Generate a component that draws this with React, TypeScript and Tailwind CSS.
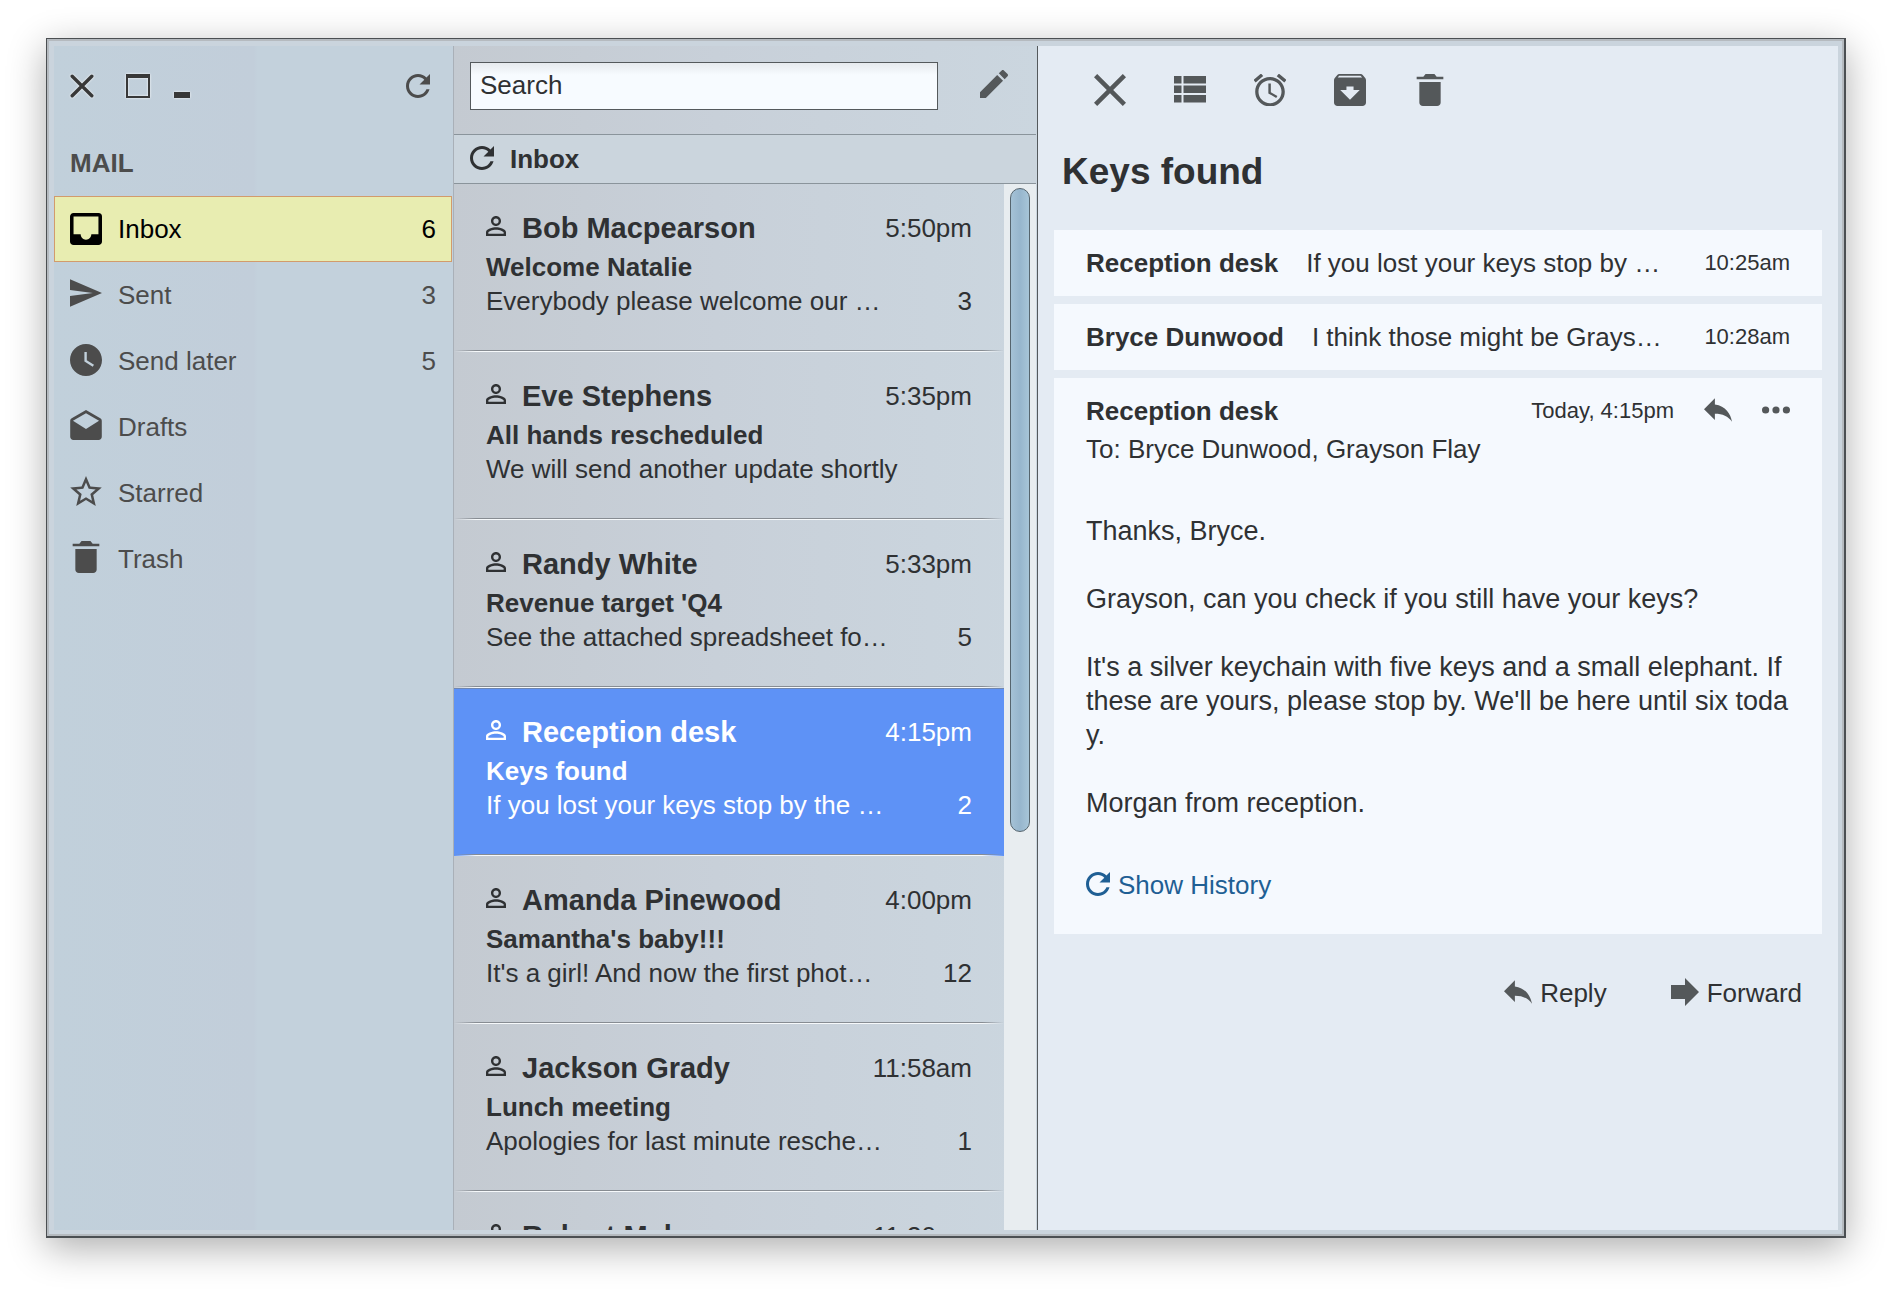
import type { ReactNode } from "react";
import { IoMdAlarm, IoMdArchive, IoMdClose, IoMdCreate, IoMdRefresh, IoMdTrash } from "react-icons/io";
import { MdDrafts, MdInbox, MdPersonOutline, MdReply, MdSend, MdStarOutline, MdWatchLater } from "react-icons/md";

type Folder = { name: string; count?: number; icon: ReactNode; active?: boolean };

const folders: Folder[] = [
  { name: "Inbox", count: 6, active: true, icon: <MdInbox viewBox="3 3 18 18" className="h-8 w-8" /> },
  { name: "Sent", count: 3, icon: <MdSend viewBox="2 3 21 18" className="mb-1 h-7 w-8" /> },
  { name: "Send later", count: 5, icon: <MdWatchLater viewBox="2 2 20 20" className="mb-0.5 h-8 w-8" /> },
  { name: "Drafts", icon: <MdDrafts viewBox="2 1 20 19" className="mb-1 h-[30px] w-8" /> },
  { name: "Starred", icon: <MdStarOutline viewBox="2 2 20 19" className="mb-1 h-[30px] w-8" /> },
  { name: "Trash", icon: <IoMdTrash viewBox="64 64 384 384" className="mb-1 h-8 w-8" /> },
];

type Mail = { from: string; time: string; subject: string; preview: string; count?: number; selected?: boolean };

const mails: Mail[] = [
  { from: "Bob Macpearson", time: "5:50pm", subject: "Welcome Natalie", preview: "Everybody please welcome our …", count: 3 },
  { from: "Eve Stephens", time: "5:35pm", subject: "All hands rescheduled", preview: "We will send another update shortly" },
  { from: "Randy White", time: "5:33pm", subject: "Revenue target 'Q4", preview: "See the attached spreadsheet fo…", count: 5 },
  { from: "Reception desk", time: "4:15pm", subject: "Keys found", preview: "If you lost your keys stop by the …", count: 2, selected: true },
  { from: "Amanda Pinewood", time: "4:00pm", subject: "Samantha's baby!!!", preview: "It's a girl! And now the first phot…", count: 12 },
  { from: "Jackson Grady", time: "11:58am", subject: "Lunch meeting", preview: "Apologies for last minute resche…", count: 1 },
  { from: "Robert Malone", time: "11:30am", subject: "", preview: "" },
];

const earlier = [
  { from: "Reception desk", text: "If you lost your keys stop by …", time: "10:25am" },
  { from: "Bryce Dunwood", text: "I think those might be Grays…", time: "10:28am" },
];

function ListIcon() {
  return (
    <svg viewBox="0 0 32 32" className="h-8 w-8" fill="currentColor" aria-hidden="true">
      <path d="M0 2h7.500v7.500H0zM9.500 2H32v7.500H9.500zM0 11.500h7.500V19H0zM9.500 11.500H32V19H9.500zM0 21h7.500v7.500H0zM9.500 21H32v7.500H9.500z" />
    </svg>
  );
}

function ForwardIcon() {
  return (
    <svg viewBox="0 0 28 28" className="h-7 w-7" fill="currentColor" aria-hidden="true">
      <path d="M0 7h14V0l14 14-14 14v-7H0z" />
    </svg>
  );
}

function DotsIcon() {
  return (
    <svg viewBox="0 0 28 8" className="h-2 w-7" fill="currentColor" aria-hidden="true">
      <circle cx="3.600" cy="4" r="3.600" />
      <circle cx="14" cy="4" r="3.600" />
      <circle cx="24.400" cy="4" r="3.600" />
    </svg>
  );
}

function Sidebar() {
  return (
    <aside className="flex w-[400px] shrink-0 flex-col border-r border-[#a9b0b8] bg-[linear-gradient(90deg,#c1d0db_0%,#c2ceda_50%,#c3d1dc_51%,#c3d1dc_100%)] text-[#4c4c4c]">
      <div className="flex items-center pt-7 pr-[23px] pl-4">
        <button aria-label="Close window" className="mr-8 text-[#383838] drop-shadow-[0_0_1px_#fff]">
          <svg viewBox="0 0 24 24" className="h-6 w-6" fill="none" stroke="currentColor" strokeWidth="3.400" strokeLinecap="round">
            <path d="M2.200 2.200l19.600 19.600M21.800 2.200L2.200 21.800" />
          </svg>
        </button>
        <button aria-label="Maximize window" className="mr-6 text-[#383838] drop-shadow-[0_0_1px_#fff]">
          <svg viewBox="0 0 24 24" className="h-6 w-6" fill="currentColor" fillRule="evenodd">
            <path d="M0 0h24v24H0zM2 4v18h20V4z" />
          </svg>
        </button>
        <button aria-label="Minimize window" className="text-[#383838] drop-shadow-[0_0_1px_#fff]">
          <svg viewBox="0 0 16 24" className="h-6 w-4" fill="currentColor">
            <path d="M0 18h16v6H0z" />
          </svg>
        </button>
        <button aria-label="Refresh" className="ml-auto">
          <IoMdRefresh viewBox="80 80 352 352" className="h-6 w-6" />
        </button>
      </div>
      <h2 className="mt-12 mb-4 pl-4 text-[26px] leading-[34px] font-bold">MAIL</h2>
      <nav className="mr-px flex flex-col text-[26px] leading-[34px]">
        {folders.map((f) => (
          <button
            key={f.name}
            className={
              "flex h-[66px] items-center gap-4 border px-[15px] text-left " +
              (f.active ? "border-[#d29b6c] bg-[#e8edb1] text-black" : "border-transparent")
            }
          >
            {f.icon}
            <span className="flex-1">{f.name}</span>
            {f.count !== undefined && <span>{f.count}</span>}
          </button>
        ))}
      </nav>
    </aside>
  );
}

function MailRow({ mail }: { mail: Mail }) {
  return (
    <li className={"shrink-0 " + (mail.selected ? "bg-[#5e92f6] text-white" : "")}>
      <button
        className={
          "block w-full px-8 pb-8 text-left text-[26px] leading-[34px] " +
          (mail.selected ? "border-t border-[#6f86b0] pt-[26px]" : "pt-[27px]")
        }
      >
        <span className="mb-[5px] flex items-center">
          <MdPersonOutline viewBox="4 4 16 16" className="mr-4 mb-1 h-5 w-5" />
          <span className="flex-1 text-[29px] font-bold">{mail.from}</span>
          <span>{mail.time}</span>
        </span>
        <span className="block font-bold">{mail.subject}</span>
        <span className="flex">
          <span className="flex-1 whitespace-nowrap">{mail.preview}</span>
          <span>{mail.count}</span>
        </span>
      </button>
      <div className="h-px bg-[linear-gradient(90deg,transparent,#878c92_4%,#878c92_96%,transparent)]" />
      <div className="h-px bg-[linear-gradient(90deg,transparent,#f6f9fb_4%,#f6f9fb_96%,transparent)]" />
    </li>
  );
}

function MailList() {
  return (
    <section className="flex w-[583px] shrink-0 flex-col bg-[linear-gradient(90deg,#c4cad1,#c8d0d9_45%,#cbd6df)] pr-px">
      <div className="flex h-[88px] items-start gap-[42px] pt-4 pr-7 pl-4">
        <input
          type="search"
          aria-label="Search mail"
          placeholder="Search"
          className="h-12 min-w-0 flex-1 appearance-none border border-[#54595c] bg-[linear-gradient(180deg,#e6eaee,#f7fbff_12px)] px-[9px] pb-0.5 text-[26px] leading-[34px] outline-none placeholder:text-[#2f3133]"
        />
        <button aria-label="Compose" className="mt-2 text-[#54585a]">
          <IoMdCreate viewBox="64 64 384 384" className="h-7 w-7" />
        </button>
      </div>
      <div className="flex h-[50px] items-center gap-4 border-y border-[#8a949b] bg-[#cbd5dd] px-4">
        <IoMdRefresh viewBox="80 80 352 352" className="mb-0.5 h-6 w-6" />
        <h2 className="text-[26px] leading-[34px] font-bold">Inbox</h2>
      </div>
      <div className="flex min-h-0 flex-1">
        <ul className="flex min-w-0 flex-1 flex-col overflow-hidden">
          {mails.map((m) => (
            <MailRow key={m.from} mail={m} />
          ))}
        </ul>
        <div className="w-8 bg-[#e8edf0] px-1.5 py-1">
          <div className="h-[644px] rounded-full border border-[#56656e] bg-[linear-gradient(90deg,#a5c2d6,#97b6cd_50%,#a7c5d8)]" />
        </div>
      </div>
    </section>
  );
}

function Reader() {
  return (
    <main className="flex min-w-0 flex-1 flex-col border-l border-[#54595c] bg-[#e4ebf3] px-4 pt-7">
      <div className="flex gap-12 pl-10 text-[#54585a]">
        <button aria-label="Close message"><IoMdClose viewBox="107 107 298 298" className="h-8 w-8" /></button>
        <button aria-label="Toggle list"><ListIcon /></button>
        <button aria-label="Snooze"><IoMdAlarm viewBox="48 48 416 416" className="h-8 w-8" /></button>
        <button aria-label="Archive"><IoMdArchive viewBox="48 48 416 416" className="h-8 w-8" /></button>
        <button aria-label="Delete"><IoMdTrash viewBox="64 64 384 384" className="h-8 w-8" /></button>
      </div>
      <h1 className="mt-[42px] mb-[34px] pl-2 text-[37px] leading-[48px] font-bold">Keys found</h1>
      <div className="flex flex-col gap-2 text-[26px] leading-[34px]">
        {earlier.map((e) => (
          <article key={e.from} className="flex items-center bg-[#f5f9fe] px-8 py-4">
            <h3 className="mr-7 font-bold whitespace-nowrap">{e.from}</h3>
            <p className="min-w-0 flex-1 overflow-hidden whitespace-nowrap">{e.text}</p>
            <time className="text-[22px]">{e.time}</time>
          </article>
        ))}
        <article className="bg-[#f5f9fe] px-8 pt-4 pb-8">
          <header className="mb-1 flex items-center gap-[30px]">
            <h3 className="flex-1 font-bold">Reception desk</h3>
            <time className="text-[22px]">Today, 4:15pm</time>
            <button aria-label="Reply to message" className="mb-0.5 text-[#54585a]">
              <MdReply viewBox="3 5 18 15" className="h-6 w-7" />
            </button>
            <button aria-label="More actions" className="mb-0.5 text-[#54585a]"><DotsIcon /></button>
          </header>
          <p>To: Bryce Dunwood, Grayson Flay</p>
          <div className="mt-12 flex flex-col gap-[34px] text-[27px] whitespace-nowrap">
            <p>Thanks, Bryce.</p>
            <p>Grayson, can you check if you still have your keys?</p>
            <p>
              It's a silver keychain with five keys and a small elephant. If
              <br />
              these are yours, please stop by. We'll be here until six toda
              <br />
              y.
            </p>
            <p>Morgan from reception.</p>
          </div>
          <a href="#history" className="mt-12 flex items-center gap-2 text-[#1f5f94]">
            <IoMdRefresh viewBox="80 80 352 352" className="mb-0.5 h-6 w-6" />
            Show History
          </a>
        </article>
      </div>
      <div className="mt-[42px] flex justify-end gap-16 pr-5 text-[26px] leading-[34px]">
        <button className="flex items-center gap-2">
          <MdReply viewBox="3 5 18 15" className="mb-0.5 h-6 w-7 text-[#54585a]" />
          Reply
        </button>
        <button className="flex items-center gap-2">
          <span className="mb-0.5 text-[#54585a]"><ForwardIcon /></span>
          Forward
        </button>
      </div>
    </main>
  );
}

export default function App() {
  return (
    <div className="flex h-screen bg-white px-[46px] pt-[38px] pb-[54px] font-['Liberation_Sans',Arial,sans-serif] text-[#2f3133]">
      <div className="flex min-w-0 flex-1 border-t border-r-2 border-b-2 border-l border-[#4b4f52] shadow-[0_10px_36px_rgba(0,0,0,0.32)]">
        <div className="flex min-w-0 flex-1 border-2 border-[#b5babf] bg-[#cad4dd] pt-[5px] pr-1 pb-1 pl-[5px]">
          <Sidebar />
          <MailList />
          <Reader />
        </div>
      </div>
    </div>
  );
}
